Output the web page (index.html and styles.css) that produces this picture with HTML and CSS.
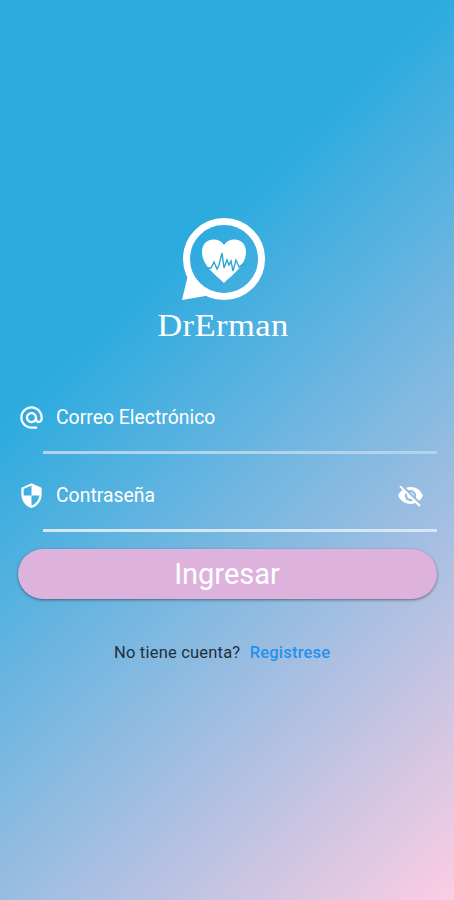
FILE: index.html
```html
<!DOCTYPE html>
<html lang="es">
<head>
    <meta charset="UTF-8" />
    <meta name="viewport" content="width=device-width, initial-scale=1.0" />
    <title>DrErman</title>
    <link rel="stylesheet" href="styles.css">
</head>
<body>
    <main class="login">
        <div class="brand">
            <svg class="brand-logo" viewBox="0 0 86 84" aria-hidden="true">
                <path d="M7 58 L1 83 L30 78 Z" fill="#fff" />
                <circle cx="43" cy="42" r="37.5" fill="none" stroke="#fff" stroke-width="7" />
                <path d="M43 66 C36 59 21 49 21 35 C21 21 37 19 43 28 C49 19 65 21 65 35 C65 49 50 59 43 66 Z" fill="#fff" />
                <path d="M25 51 L30 51 L33 45 L36 52 L38 48 L41 36 L43 51 L46 43 L48 48 L50 44 L52 54 L55 43 L58 50 L62 47 L65 48" fill="none" stroke="#2fa5d8" stroke-width="1.4" />
            </svg>
            <h1 class="brand-name">DrErman</h1>
        </div>

        <form class="login-form">
            <label class="field">
                <svg class="icon" viewBox="0 0 24 24">
                    <path d="M12 2C6.48 2 2 6.48 2 12s4.48 10 10 10h5v-2h-5c-4.34 0-8-3.66-8-8s3.66-8 8-8 8 3.66 8 8v1.43c0 .79-.71 1.57-1.5 1.57s-1.5-.78-1.5-1.57V12c0-2.76-2.24-5-5-5s-5 2.24-5 5 2.24 5 5 5c1.38 0 2.64-.56 3.54-1.47.65.89 1.77 1.47 2.96 1.47 1.97 0 3.5-1.6 3.5-3.57V12c0-5.52-4.48-10-10-10zm0 13c-1.66 0-3-1.34-3-3s1.34-3 3-3 3 1.34 3 3-1.34 3-3 3z" />
                </svg>
                <span>Correo Electrónico</span>
            </label>
            <label class="field field-password">
                <svg class="icon" viewBox="0 0 24 24">
                    <path d="M12 1L3 5v6c0 5.55 3.84 10.74 9 12 5.16-1.26 9-6.45 9-12V5l-9-4zm0 10.99h7c-.53 4.12-3.28 7.79-7 8.94V12H5V6.3l7-3.11v8.8z" />
                </svg>
                <span>Contraseña</span>
                <svg class="icon icon-eye" viewBox="0 0 24 24">
                    <path d="M12 7c2.76 0 5 2.24 5 5 0 .65-.13 1.26-.36 1.83l2.92 2.92c1.51-1.26 2.7-2.89 3.43-4.75-1.73-4.39-6-7.5-11-7.5-1.4 0-2.74.25-3.98.7l2.16 2.16C10.74 7.13 11.35 7 12 7zM2 4.27l2.28 2.28.46.46C3.08 8.3 1.78 10.02 1 12c1.73 4.39 6 7.5 11 7.5 1.55 0 3.03-.3 4.38-.84l.42.42L19.73 22 21 20.73 3.27 3 2 4.27zM7.53 9.8l1.55 1.55c-.05.21-.08.43-.08.65 0 1.66 1.34 3 3 3 .22 0 .44-.03.65-.08l1.55 1.55c-.67.33-1.41.53-2.2.53-2.76 0-5-2.24-5-5 0-.79.2-1.53.53-2.2zm4.31-.78l3.15 3.15.02-.16c0-1.66-1.34-3-3-3l-.17.01z" />
                </svg>
            </label>
            <button class="submit" type="button">Ingresar</button>
        </form>

        <p class="register">No tiene cuenta? <a>Registrese</a></p>
    </main>
</body>
</html>
```
FILE: styles.css
```css
* {
    box-sizing: border-box;
}
body {
    margin: 0;
    font-family: Roboto, sans-serif;
    color: white;
}
.login {
    height: 900px;
    padding: 217px 17px 0 18px;
    background: linear-gradient(136deg, #2dabdf 32%, #fccde3 100%);
}
.brand {
    display: flex;
    flex-direction: column;
    align-items: center;
    height: 161px;
    padding-right: 9px;
}
.brand-logo {
    width: 86px;
    height: 84px;
    margin-left: 1px;
}
.brand-name {
    margin: 4px 0 0;
    font-family: "Liberation Serif", serif;
    font-size: 32px;
    font-weight: normal;
    line-height: 40px;
    letter-spacing: 0.4px;
    transform: scaleX(1.08);
}
.field {
    display: flex;
    align-items: center;
    height: 78px;
    padding-right: 13px;
    font-size: 19.4px;
    /* underline starts under the right half of the icon */
    background: linear-gradient(#abd5ea, #b9d3ea) 25px 73px / 100% 3px no-repeat;
}
.field-password {
    background-image: linear-gradient(#d5e7f4, #d5e7f4);
}
.icon {
    width: 27px;
    height: 27px;
    margin-right: 11px;
    fill: white;
}
.icon-eye {
    margin: 0 0 0 auto;
}
.submit {
    display: block;
    width: 100%;
    height: 50px;
    margin-top: 15px;
    padding: 0 1px 0 0;
    border: none;
    border-radius: 25px;
    background: #ddb3dd;
    box-shadow: 0 1px 3px rgba(0, 0, 0, 0.45);
    color: white;
    font-family: inherit;
    font-size: 29px;
    line-height: 50px;
}
.register {
    margin: 44px 0 0 96px;
    font-size: 16.5px;
    line-height: 20px;
    letter-spacing: 0.2px;
    color: #20303d;
}
.register a {
    margin-left: 5px;
    color: #2491ee;
    font-weight: 500;
}
```
